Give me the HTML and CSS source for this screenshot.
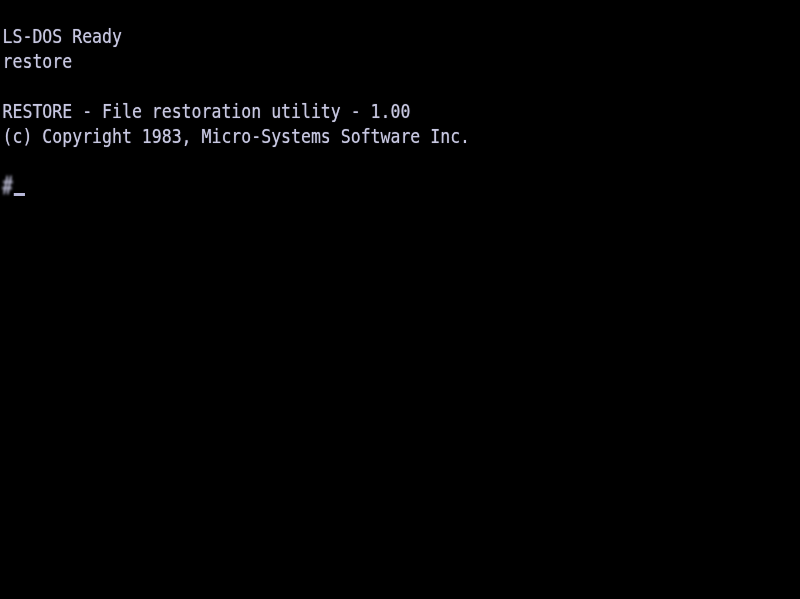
FILE: index.html
```html
<!DOCTYPE html>
<html>
<head>
<meta charset="utf-8">
<link rel="stylesheet" href="styles.css">
</head>
<body>
<div class="screen">
<pre class="term">LS-DOS Ready
restore

RESTORE - File restoration utility - 1.00
(c) Copyright 1983, Micro-Systems Software Inc.

<span class="mark">#</span><span class="cursor"></span></pre>
</div>
</body>
</html>
```
FILE: styles.css
```css
html, body {
  margin: 0;
  padding: 0;
  background: #000;
  width: 800px;
  height: 599px;
  overflow: hidden;
}
.screen {
  width: 800px;
  height: 599px;
  background: #000;
  overflow: hidden;
}
.term {
  margin: 0;
  padding: 25px 0 0 3px;
  font-family: "DejaVu Sans Mono", monospace;
  font-size: 19.2px;
  line-height: 24.96px;
  color: #c8c8e2;
  transform: scaleX(0.861);
  transform-origin: 0 0;
  width: 930px;
  text-shadow: 0 0 1px rgba(200, 200, 226, 0.6);
}
.mark {
  display: inline-block;
  transform: scale(1.1, 1.25);
  filter: blur(1.4px);
}
.cursor {
  display: inline-block;
  width: 13px;
  height: 3px;
  margin-left: 1px;
  background: #b8b8d8;
  filter: blur(0.6px);
  vertical-align: -3px;
}
```
